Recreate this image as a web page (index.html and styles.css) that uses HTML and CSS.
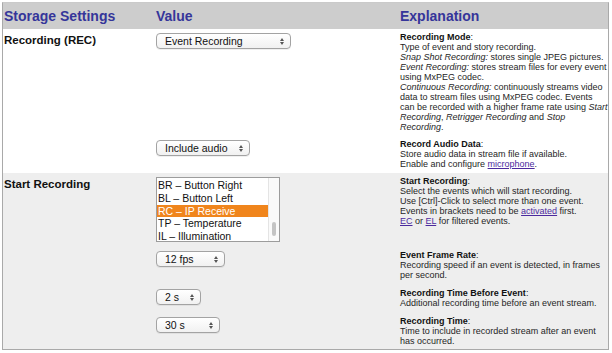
FILE: index.html
```html
<!DOCTYPE html>
<html lang="en">
<head>
  <meta charset="UTF-8" />
  <title>Storage Settings</title>
  <link rel="stylesheet" href="styles.css">
</head>
<body>

  <div class="frame">
    <div class="row head">
      <div class="label-col">Storage Settings</div>
      <div>Value</div>
      <div>Explanation</div>
    </div>

    <div class="row">
      <div class="label">Recording (REC)</div>
      <div class="value">
        <span class="select" style="width: 135px">Event Recording<svg class="arrows" width="4" height="7" viewBox="0 0 4 7"><path d="M0 3 L2 0 L4 3 Z M0 4 L2 7 L4 4 Z"/></svg></span>
      </div>
      <div class="help">
        <b>Recording Mode</b>:<br>
        Type of event and story recording.<br>
        <i>Snap Shot Recording:</i> stores single JPEG pictures.<br>
        <i>Event Recording:</i> stores stream files for every event<br>
        using MxPEG codec.<br>
        <i>Continuous Recording:</i> continuously streams video<br>
        data to stream files using MxPEG codec. Events<br>
        can be recorded with a higher frame rate using <i>Start</i><br>
        <i>Recording</i>, <i>Retrigger Recording</i> and <i>Stop</i><br>
        <i>Recording</i>.
      </div>
    </div>

    <div class="row">
      <div class="label"></div>
      <div class="value">
        <span class="select" style="width: 94px">Include audio<svg class="arrows" width="4" height="7" viewBox="0 0 4 7"><path d="M0 3 L2 0 L4 3 Z M0 4 L2 7 L4 4 Z"/></svg></span>
      </div>
      <div class="help">
        <b>Record Audio Data</b>:<br>
        Store audio data in stream file if available.<br>
        Enable and configure <a href="#">microphone</a>.
      </div>
    </div>

    <div class="group">
      <div class="row">
        <div class="label">Start Recording</div>
        <div class="value">
          <div class="listbox">
            <ul>
              <li>BR – Button Right</li>
              <li>BL – Button Left</li>
              <li class="selected">RC – IP Receive</li>
              <li>TP – Temperature</li>
              <li>IL – Illumination</li>
            </ul>
            <div class="scrollbar"><div class="thumb"></div></div>
          </div>
        </div>
        <div class="help">
          <b>Start Recording</b>:<br>
          Select the events which will start recording.<br>
          Use [Ctrl]-Click to select more than one event.<br>
          Events in brackets need to be <a href="#">activated</a> first.<br>
          <a href="#">EC</a> or <a href="#">EL</a> for filtered events.
        </div>
      </div>

      <div class="row">
        <div class="label"></div>
        <div class="value">
          <span class="select" style="width: 69px">12 fps<svg class="arrows" width="4" height="7" viewBox="0 0 4 7"><path d="M0 3 L2 0 L4 3 Z M0 4 L2 7 L4 4 Z"/></svg></span>
        </div>
        <div class="help">
          <b>Event Frame Rate</b>:<br>
          Recording speed if an event is detected, in frames<br>
          per second.
        </div>
      </div>

      <div class="row">
        <div class="label"></div>
        <div class="value">
          <span class="select" style="width: 45px">2 s<svg class="arrows" width="4" height="7" viewBox="0 0 4 7"><path d="M0 3 L2 0 L4 3 Z M0 4 L2 7 L4 4 Z"/></svg></span>
        </div>
        <div class="help">
          <b>Recording Time Before Event</b>:<br>
          Additional recording time before an event stream.
        </div>
      </div>

      <div class="row">
        <div class="label"></div>
        <div class="value">
          <span class="select" style="width: 64px">30 s<svg class="arrows" width="4" height="7" viewBox="0 0 4 7"><path d="M0 3 L2 0 L4 3 Z M0 4 L2 7 L4 4 Z"/></svg></span>
        </div>
        <div class="help">
          <b>Recording Time</b>:<br>
          Time to include in recorded stream after an event<br>
          has occurred.
        </div>
      </div>
    </div>
  </div>

</body>
</html>
```

FILE: styles.css
```css
* {
  box-sizing: border-box;
}
body {
  font-family: "Liberation Sans", Arial, sans-serif;
  background: #fff;
  margin: 0;
  padding: 2px;
}
.frame {
  width: 607px;
  height: 348px;
  border: 1px solid #a9a9a9;
  border-top-color: #cacaca;
  display: flex;
  flex-direction: column;
  overflow: hidden;
}
.row {
  display: grid;
  grid-template-columns: 153px 244px 1fr;
  padding: 3px 0 4px;
}
.head {
  background: #cdcdcd;
  height: 26px;
  padding: 0;
  line-height: 26px;
  font-size: 14px;
  font-weight: bold;
  color: #35359a;
}
.label-col,
.label {
  padding-left: 1px;
}
.label {
  font-size: 11.5px;
  font-weight: bold;
  line-height: 15px;
  margin-top: 1px;
  color: #111;
}
.group {
  flex: 1;
  background: #eee;
}
.group .row {
  padding-bottom: 5px;
}
.help {
  font-size: 9px;
  line-height: 10px;
  color: #262626;
  white-space: nowrap;
}
.help b {
  color: #111;
}
.help a {
  color: #4b2a9e;
}
.select {
  display: flex;
  align-items: center;
  justify-content: space-between;
  height: 16px;
  margin-top: 1px;
  padding: 0 6px 0 8px;
  font-size: 10.5px;
  color: #111;
  background: linear-gradient(#fff, #f1f1f1);
  border: 1px solid #a3a3a3;
  border-radius: 4px;
  box-shadow: 0 1px 0 rgba(0, 0, 0, 0.06);
}
.arrows {
  fill: #555;
}
.listbox {
  display: flex;
  width: 124px;
  height: 65px;
  margin-top: 1px;
  background: #fff;
  border: 1px solid #9c9c9c;
  overflow: hidden;
}
.listbox ul {
  flex: 1;
  list-style: none;
  margin: 0;
  padding: 1px 0 0;
  font-size: 10.5px;
  line-height: 12.75px;
  color: #111;
}
.listbox li {
  padding-left: 1px;
  white-space: nowrap;
}
.listbox li.selected {
  background: #f0851c;
  color: #fff;
}
.scrollbar {
  width: 11px;
  border-left: 1px solid #e4e4e4;
  background: #fafafa;
  padding: 44px 3px 0;
}
.thumb {
  height: 14px;
  background: #c4c4c4;
  border-radius: 3px;
}
```
